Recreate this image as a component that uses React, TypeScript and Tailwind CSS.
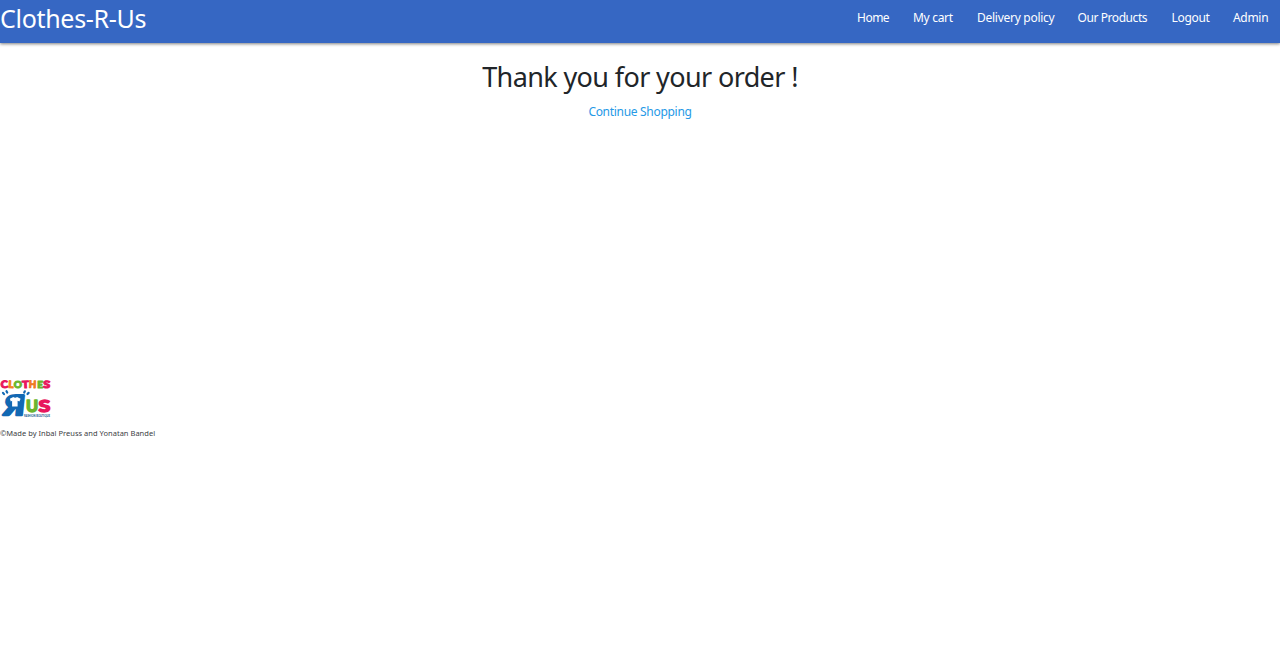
const links = [
  { label: "Home", width: "w-[32px]", spacing: "tracking-[-0.5px]" },
  { label: "My cart", width: "w-[40px]", spacing: "tracking-[-0.3px]" },
  { label: "Delivery policy", width: "w-[76.5px]", spacing: "tracking-[-0.27px]" },
  { label: "Our Products", width: "w-[70px]", spacing: "tracking-[-0.42px]" },
  { label: "Logout", width: "w-[37.5px]", spacing: "tracking-[-0.3px]" },
  { label: "Admin", width: "w-[35px]", spacing: "tracking-[-0.3px]" },
];

const title = [
  { char: "C", x: 0.6, w: 7.4, color: "#e8175d", turn: "rotate(-5 4 10)" },
  { char: "L", x: 8.4, w: 5.2, color: "#f58220", turn: "rotate(3 11 10)" },
  { char: "O", x: 13.8, w: 8.2, color: "#6cb52d", turn: "rotate(0)" },
  { char: "T", x: 22.1, w: 6.9, color: "#e8175d", turn: "rotate(-3 25 10)" },
  { char: "H", x: 29, w: 7.4, color: "#f07a23", turn: "rotate(2 33 10)" },
  { char: "E", x: 37.2, w: 5.8, color: "#6cb52d", turn: "rotate(0)" },
  { char: "S", x: 43.3, w: 7, color: "#e8175d", turn: "rotate(4 47 10)" },
];

function Logo() {
  return (
    <svg className="block h-12 w-[60px]" viewBox="0 0 60 48" fontFamily="Lato, sans-serif" fontWeight="900">
      {title.map((t) => (
        <text key={t.char} x={t.x} y="14" fontSize="10" fill={t.color} stroke={t.color} strokeWidth="1" strokeLinejoin="round" textLength={t.w} lengthAdjust="spacingAndGlyphs" transform={t.turn}>
          {t.char}
        </text>
      ))}
      <g stroke="#1268b3" strokeWidth="2.2" strokeLinecap="round">
        <path d="M3 18.9l1 1.2M6.5 17.2l.7 1.3M24.8 17.3l-.6 1.3M28.6 18.9l-1.1 1.1" />
      </g>
      <g transform="translate(23.8 41) scale(-1 1) skewX(6)">
        <text x="0" y="0" fontSize="27" fill="#1268b3" stroke="#1268b3" strokeWidth="2.6" strokeLinejoin="round" textLength="20.5" lengthAdjust="spacingAndGlyphs">R</text>
      </g>
      <path d="M9.9 24.8l3.4-1.8c1 1 2.8 1 3.7 0l3.6 1.8-1.2 2.8-1.8-.8v5.6h-5.5v-5.6l-1.3.7z" fill="#fff" />
      <g fontSize="17.4" strokeWidth="1.4" strokeLinejoin="round">
        <text x="26" y="38" fill="#6cb52d" stroke="#6cb52d" textLength="12.2" lengthAdjust="spacingAndGlyphs">U</text>
        <text x="38.5" y="38" fill="#e8175d" stroke="#e8175d" textLength="11.8" lengthAdjust="spacingAndGlyphs">S</text>
      </g>
      <text x="24" y="42.5" fontSize="2.8" fill="#1e5c91" textLength="26" lengthAdjust="spacingAndGlyphs">FASHION BOUTIQUE</text>
    </svg>
  );
}

export default function App() {
  return (
    <div className="h-[648px] overflow-hidden bg-white font-['Noto_Sans','Open_Sans',sans-serif] text-[#212529]">
      <header className="flex h-[43px] justify-between bg-[#3667c3] text-white shadow-[0_1px_3px_rgba(0,0,0,0.5)]">
        <a href="#" className="h-[36px] whitespace-nowrap text-[25px] leading-[36px] tracking-[-0.3px]">Clothes-R-Us</a>
        <nav className="flex h-[35px] gap-6 pr-3 text-[12px] leading-[35px]">
          {links.map((l) => (
            <a key={l.label} href="#" className={`whitespace-nowrap ${l.width} ${l.spacing}`}>{l.label}</a>
          ))}
        </nav>
      </header>
      <main className="flex h-[331px] flex-col items-center pt-[15px]">
        <h1 className="h-[38px] whitespace-nowrap text-[27px] leading-[37px] tracking-[-0.62px]">Thank you for your order !</h1>
        <a href="#" className="mt-[6px] h-5 whitespace-nowrap text-[12px] leading-5 tracking-[-0.3px] text-[#2699e6]">Continue Shopping</a>
      </main>
      <footer>
        <Logo />
        <p className="mt-[5px] whitespace-nowrap text-[7.5px] leading-3 tracking-[0.02px] text-[#3c4044]">©Made by Inbal Preuss and Yonatan Bandel</p>
      </footer>
    </div>
  );
}
